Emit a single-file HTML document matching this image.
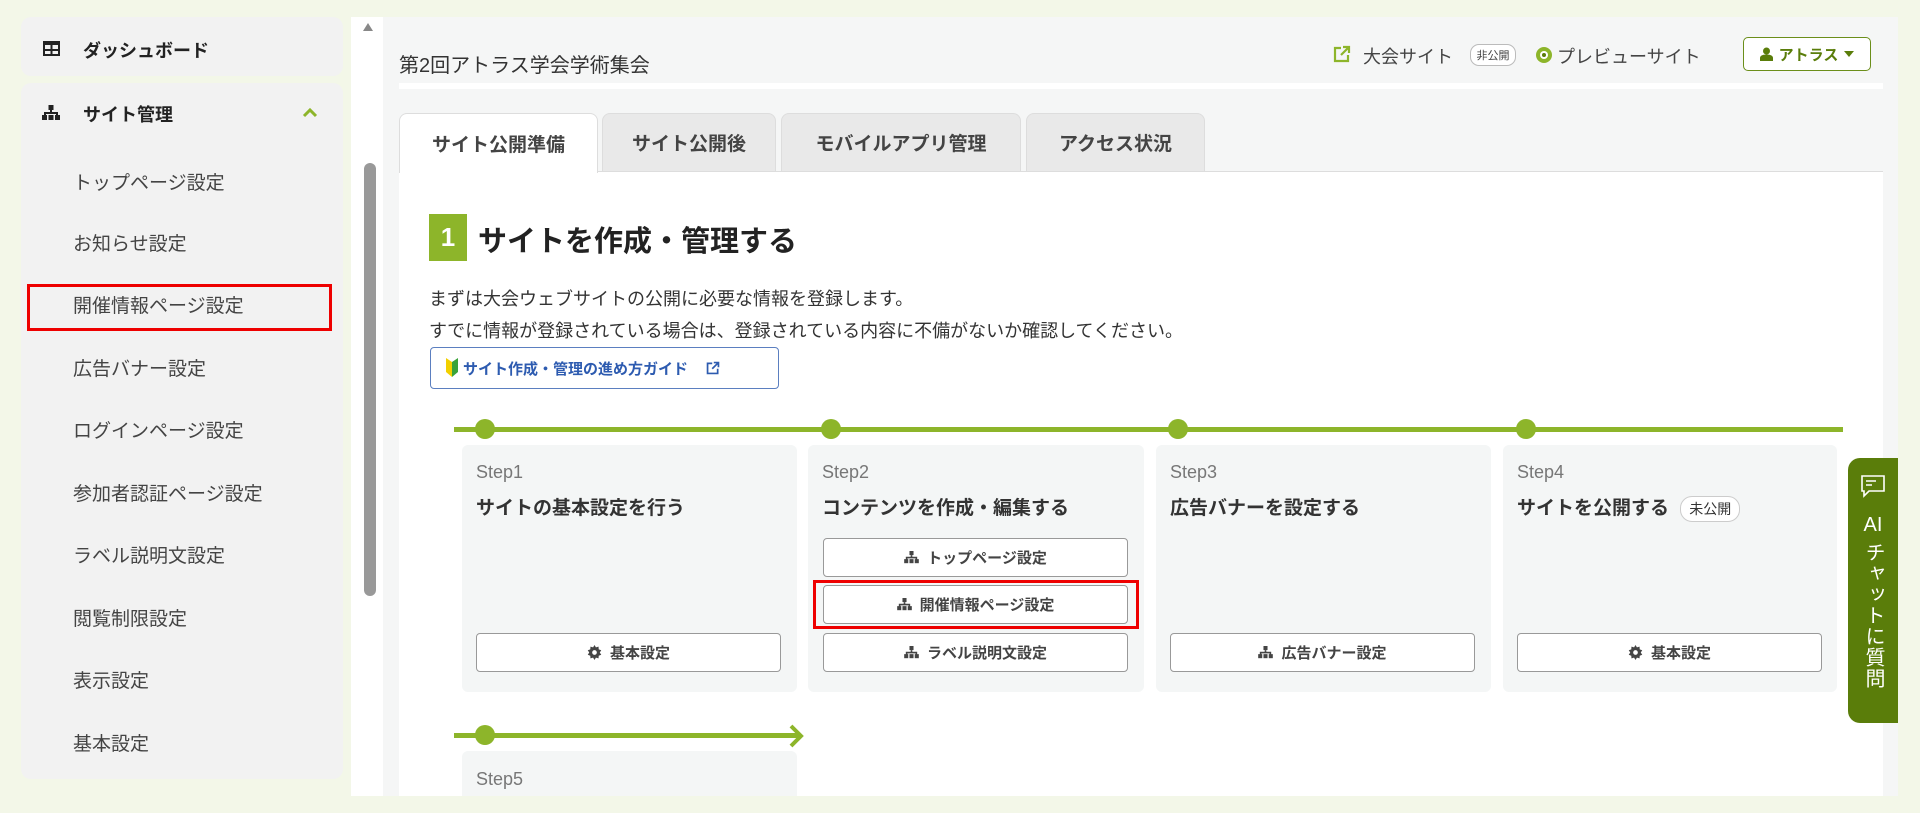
<!DOCTYPE html>
<html><head><meta charset="utf-8">
<style>
*{box-sizing:border-box;margin:0;padding:0}
body{width:1920px;height:813px;overflow:hidden;background:#f3f7e8;font-family:"Liberation Sans","Noto Sans CJK JP",sans-serif;color:#333;position:relative}
.a{position:absolute}
.card{background:#f2f2f2;border-radius:10px}
.item{position:absolute;left:73px;font-size:19px;color:#444;line-height:24px;transform:translateY(-12px)}
.btn{position:absolute;background:#fff;border:1.5px solid #999;border-radius:4px;height:39px;display:flex;align-items:center;justify-content:center;font-size:15px;font-weight:bold;color:#444;gap:8px}
.scard{position:absolute;top:445px;height:247px;background:#f4f6f6;border-radius:6px}
.step{position:absolute;left:14px;top:17px;font-size:18px;color:#777}
.stitle{position:absolute;left:14px;top:48px;font-size:19px;font-weight:bold;color:#333;white-space:nowrap}
.dot{position:absolute;width:20px;height:20px;border-radius:50%;background:#8db52a;top:419px}
.tab{position:absolute;top:113px;height:58px;background:#e9e9e9;border:1px solid #ddd;border-bottom:none;border-radius:8px 8px 0 0;display:flex;align-items:center;justify-content:center;font-size:19px;font-weight:bold;color:#444}
</style></head><body>
<svg width="0" height="0" style="position:absolute">
<defs>
<symbol id="org" viewBox="0 0 18 16"><rect x="6.5" y="0" width="5" height="5" fill="currentColor"/><path d="M9 5v4M3 11V8h12v3" stroke="currentColor" stroke-width="2" fill="none"/><rect x="0" y="10" width="5" height="5" fill="currentColor"/><rect x="6.5" y="10" width="5" height="5" fill="currentColor"/><rect x="13" y="10" width="5" height="5" fill="currentColor"/></symbol>
<symbol id="gear" viewBox="0 0 16 16"><path d="M8 0l1.5 2.5 2.8-.8.2 2.9 2.7 1L13.6 8l1.6 2.4-2.7 1-.2 2.9-2.8-.8L8 16l-1.5-2.5-2.8.8-.2-2.9-2.7-1L2.4 8 .8 5.6l2.7-1 .2-2.9 2.8.8z" fill="currentColor"/><circle cx="8" cy="8" r="2.5" fill="#fff"/></symbol>
</defs></svg>
<!-- sidebar -->
<div class="a card" style="left:21px;top:17px;width:322px;height:59px"></div>
<svg class="a" style="left:43px;top:41px" width="17" height="15" viewBox="0 0 17 15"><rect x="1" y="1" width="15" height="13" fill="none" stroke="#222" stroke-width="2"/><rect x="1" y="1" width="15" height="3" fill="#222"/><line x1="8.5" y1="1" x2="8.5" y2="14" stroke="#222" stroke-width="2"/><line x1="1" y1="9" x2="16" y2="9" stroke="#222" stroke-width="2"/></svg>
<div class="a" style="left:83px;top:37px;font-size:18px;font-weight:bold;color:#222">ダッシュボード</div>
<div class="a card" style="left:21px;top:83px;width:322px;height:696px"></div>
<svg class="a" style="left:42px;top:105px;color:#222" width="18" height="16"><use href="#org"/></svg>
<div class="a" style="left:83px;top:101px;font-size:18px;font-weight:bold;color:#222">サイト管理</div>
<svg class="a" style="left:302px;top:107px" width="16" height="11" viewBox="0 0 16 11"><path d="M2 9l6-6 6 6" stroke="#8db52a" stroke-width="3" fill="none"/></svg>
<div class="item" style="top:184px">トップページ設定</div>
<div class="item" style="top:245px">お知らせ設定</div>
<div class="item" style="top:307px">開催情報ページ設定</div>
<div class="item" style="top:370px">広告バナー設定</div>
<div class="item" style="top:432px">ログインページ設定</div>
<div class="item" style="top:495px">参加者認証ページ設定</div>
<div class="item" style="top:557px">ラベル説明文設定</div>
<div class="item" style="top:620px">閲覧制限設定</div>
<div class="item" style="top:682px">表示設定</div>
<div class="item" style="top:745px">基本設定</div>
<div class="a" style="left:27px;top:284px;width:305px;height:47px;border:3px solid #e00"></div>
<!-- scrollbar -->
<div class="a" style="left:351px;top:17px;width:32px;height:779px;background:#fff"></div>
<svg class="a" style="left:362px;top:22px" width="12" height="10"><path d="M6 1L11 9H1z" fill="#888"/></svg>
<div class="a" style="left:364px;top:163px;width:12px;height:433px;background:#999;border-radius:6px"></div>
<!-- main -->
<div class="a" style="left:383px;top:17px;width:1515px;height:779px;background:#f5f6f6"></div>
<div class="a" style="left:399px;top:49px;font-size:20px;color:#333">第2回アトラス学会学術集会</div>
<div class="a" style="left:399px;top:83px;width:1484px;height:6px;background:#fff"></div>
<svg class="a" style="left:1333px;top:45px" width="18" height="18" viewBox="0 0 18 18"><path d="M8 3H2v13h13v-6" stroke="#8db52a" stroke-width="2.2" fill="none"/><path d="M10 2h6v6M16 2l-8 8" stroke="#8db52a" stroke-width="2.2" fill="none"/></svg>
<div class="a" style="left:1363px;top:43px;font-size:18px;color:#444">大会サイト</div>
<div class="a" style="left:1470px;top:44px;width:46px;height:22px;border:1px solid #bbb;border-radius:9px;font-size:11px;display:flex;align-items:center;justify-content:center;color:#444;background:#fff">非公開</div>
<svg class="a" style="left:1535px;top:46px" width="18" height="18"><circle cx="9" cy="9" r="8" fill="#8db52a"/><circle cx="9" cy="9" r="4" fill="#fff"/><circle cx="9" cy="9" r="2" fill="#5a7d0a"/></svg>
<div class="a" style="left:1557px;top:43px;font-size:18px;color:#444">プレビューサイト</div>
<div class="a" style="left:1743px;top:37px;width:128px;height:34px;border:1.5px solid #6b8e1a;border-radius:5px;background:#fff;display:flex;align-items:center;justify-content:center;gap:6px;font-size:15px;font-weight:bold;color:#5a7d0a">
<svg width="13" height="14"><circle cx="6.5" cy="4" r="3.5" fill="#5a7d0a"/><path d="M0 14v-3c0-2 2-3.5 6.5-3.5S13 9 13 11v3z" fill="#5a7d0a"/></svg>アトラス<svg width="10" height="6"><path d="M0 0h10L5 6z" fill="#5a7d0a"/></svg></div>
<!-- tabs -->
<div class="tab" style="left:399px;width:199px;background:#fff;z-index:2;height:60px">サイト公開準備</div>
<div class="tab" style="left:602px;width:174px">サイト公開後</div>
<div class="tab" style="left:781px;width:240px">モバイルアプリ管理</div>
<div class="tab" style="left:1026px;width:179px">アクセス状況</div>
<div class="a" style="left:399px;top:171px;width:1484px;height:625px;background:#fff;border-top:1px solid #ddd"></div>
<div class="a" style="left:429px;top:214px;width:38px;height:47px;background:#8db52a;color:#fff;font-size:26px;font-weight:bold;display:flex;align-items:center;justify-content:center">1</div>
<div class="a" style="left:478px;top:218px;font-size:29px;font-weight:bold;color:#222">サイトを作成・管理する</div>
<div class="a" style="left:429px;top:283px;font-size:18px;color:#333;line-height:32px">まずは大会ウェブサイトの公開に必要な情報を登録します。<br>すでに情報が登録されている場合は、登録されている内容に不備がないか確認してください。</div>
<div class="a" style="left:430px;top:347px;width:349px;height:42px;border:1.5px solid #5b7fc0;border-radius:4px;display:flex;align-items:center;padding-left:14px;gap:4px;font-size:15px;font-weight:bold;color:#2d5bb0">
<svg width="14" height="20" viewBox="0 0 14 20"><path d="M7 4L1 0v14l6 5z" fill="#f2d000"/><path d="M7 4l6-4v14l-6 5z" fill="#3aa33a"/></svg>サイト作成・管理の進め方ガイド<svg style="margin-left:14px" width="14" height="14" viewBox="0 0 18 18"><path d="M8 3H2v13h13v-6" stroke="#2d5bb0" stroke-width="2.2" fill="none"/><path d="M10 2h6v6M16 2l-8 8" stroke="#2d5bb0" stroke-width="2.2" fill="none"/></svg></div>
<!-- timeline -->
<div class="a" style="left:454px;top:427px;width:1389px;height:5px;background:#8db52a"></div>
<div class="dot" style="left:475px"></div><div class="dot" style="left:821px"></div><div class="dot" style="left:1168px"></div><div class="dot" style="left:1516px"></div>
<div class="scard" style="left:462px;width:335px"><div class="step">Step1</div><div class="stitle">サイトの基本設定を行う</div></div>
<div class="scard" style="left:808px;width:336px"><div class="step">Step2</div><div class="stitle">コンテンツを作成・編集する</div></div>
<div class="scard" style="left:1156px;width:335px"><div class="step">Step3</div><div class="stitle">広告バナーを設定する</div></div>
<div class="scard" style="left:1503px;width:334px"><div class="step">Step4</div><div class="stitle">サイトを公開する <span style="display:inline-block;font-size:14px;font-weight:normal;border:1px solid #ccc;border-radius:12px;padding:2px 8px;background:#fff;vertical-align:middle;margin-left:6px">未公開</span></div></div>
<div class="btn" style="left:476px;top:633px;width:305px"><svg width="15" height="15" style="color:#444"><use href="#gear"/></svg>基本設定</div>
<div class="btn" style="left:823px;top:538px;width:305px"><svg width="15" height="13" style="color:#444"><use href="#org"/></svg>トップページ設定</div>
<div class="btn" style="left:823px;top:585px;width:305px"><svg width="15" height="13" style="color:#444"><use href="#org"/></svg>開催情報ページ設定</div>
<div class="btn" style="left:823px;top:633px;width:305px"><svg width="15" height="13" style="color:#444"><use href="#org"/></svg>ラベル説明文設定</div>
<div class="a" style="left:813px;top:580px;width:326px;height:49px;border:3px solid #e00"></div>
<div class="btn" style="left:1170px;top:633px;width:305px"><svg width="15" height="13" style="color:#444"><use href="#org"/></svg>広告バナー設定</div>
<div class="btn" style="left:1517px;top:633px;width:305px"><svg width="15" height="15" style="color:#444"><use href="#gear"/></svg>基本設定</div>
<!-- step5 -->
<div class="a" style="left:454px;top:733px;width:345px;height:5px;background:#8db52a"></div>
<svg class="a" style="left:788px;top:724px" width="16" height="24"><path d="M3 2l10 10-10 10" stroke="#8db52a" stroke-width="4" fill="none"/></svg>
<div class="dot" style="left:475px;top:725px"></div>
<div class="scard" style="left:462px;top:751px;width:335px;height:45px;border-radius:6px 6px 0 0"><div class="step" style="top:18px">Step5</div></div>
<!-- AI tab -->
<div class="a" style="left:1848px;top:458px;width:50px;height:265px;background:#5a7d0a;border-radius:12px 0 0 12px;color:#fff;display:flex;flex-direction:column;align-items:center;padding-top:16px">
<svg width="26" height="24" viewBox="0 0 26 24"><path d="M2 2h22v15H9l-5 5v-5H2z" fill="none" stroke="#fff" stroke-width="1.6"/><path d="M6 7h10M6 11h6" stroke="#fff" stroke-width="1.6"/></svg>
<div style="font-size:20px;margin-top:14px;line-height:26px">AI</div>
<div style="font-size:20px;margin-top:4px;writing-mode:vertical-rl;line-height:26px;letter-spacing:1px">チャットに質問</div>
</div>
</body></html>
